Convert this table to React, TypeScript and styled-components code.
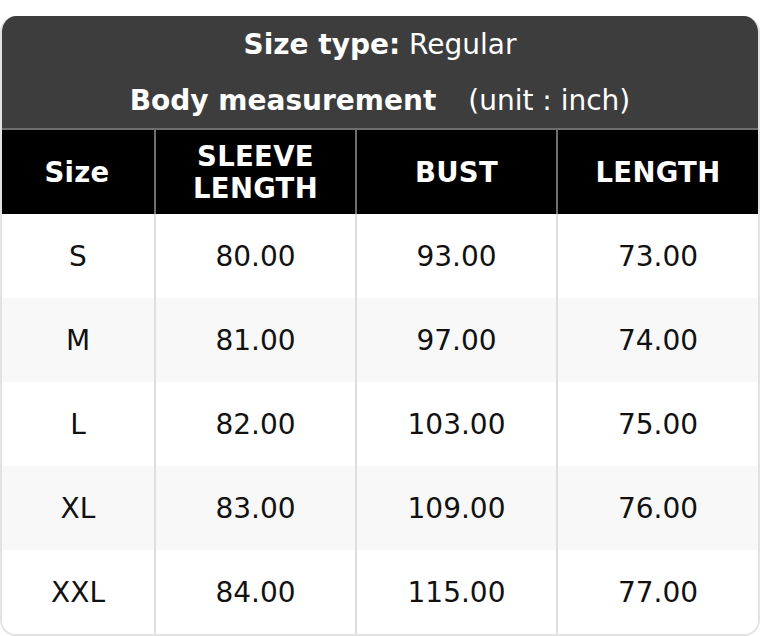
import React from "react";
import styled, { createGlobalStyle } from "styled-components";

const Global = createGlobalStyle`
  html, body { margin: 0; padding: 0; background: #fff; }
  body { padding-top: 16px; font-family: "DejaVu Sans", "Liberation Sans", sans-serif; }
`;

const Card = styled.div`
  width: 760px;
  box-sizing: border-box;
  border-radius: 16px;
  overflow: hidden;
  border: 2px solid #e2e2e2;
  border-top: none;
  background: #fff;
`;

const Header = styled.div`
  background: #3d3d3d;
  color: #fff;
  height: 112px;
  display: flex;
  flex-direction: column;
  align-items: center;
  margin: 0 -2px;
`;

const HeaderLine = styled.div<{ $h: number }>`
  height: ${(p) => p.$h}px;
  display: flex;
  align-items: center;
  justify-content: center;
  font-size: 28px;
  white-space: pre;
`;

const Bold = styled.span`
  font-weight: bold;
`;

const Unit = styled.span`
  margin-left: 32px;
`;

const Grid = styled.div`
  display: grid;
  grid-template-columns: 152px 201px 201px 1fr;
`;

const HeadCell = styled.div<{ $first?: boolean }>`
  background: #000;
  color: #fff;
  height: 84px;
  display: flex;
  align-items: center;
  justify-content: center;
  text-align: center;
  font-weight: bold;
  font-size: 27.5px;
  line-height: 32px;
  letter-spacing: 0.3px;
  white-space: pre-line;
  border-top: 2px solid #6e6e6e;
  border-left: ${(p) => (p.$first ? "none" : "2px solid #6e6e6e")};
  margin: ${(p) => (p.$first ? "0 0 0 -2px" : "0")};
`;

const Cell = styled.div<{ $alt: boolean; $first?: boolean }>`
  background: ${(p) => (p.$alt ? "#f8f8f8" : "#fff")};
  color: #111;
  height: 84px;
  display: flex;
  align-items: center;
  justify-content: center;
  font-size: 28px;
  border-left: ${(p) => (p.$first ? "none" : "2px solid #dedede")};
`;

const heads = ["Size", "SLEEVE\nLENGTH", "BUST", "LENGTH"];
const rows = [
  ["S", "80.00", "93.00", "73.00"],
  ["M", "81.00", "97.00", "74.00"],
  ["L", "82.00", "103.00", "75.00"],
  ["XL", "83.00", "109.00", "76.00"],
  ["XXL", "84.00", "115.00", "77.00"],
];

export default function App() {
  return (
    <>
      <Global />
      <Card>
        <Header>
          <HeaderLine $h={56}>
            <Bold>Size type:</Bold> Regular
          </HeaderLine>
          <HeaderLine $h={56}>
            <Bold>Body measurement</Bold>
            <Unit>(unit : inch)</Unit>
          </HeaderLine>
        </Header>
        <Grid>
          {heads.map((h, i) => (
            <HeadCell key={h} $first={i === 0}>
              {h}
            </HeadCell>
          ))}
          {rows.map((r, ri) =>
            r.map((c, ci) => (
              <Cell key={`${ri}-${ci}`} $alt={ri % 2 === 1} $first={ci === 0}>
                {c}
              </Cell>
            ))
          )}
        </Grid>
      </Card>
    </>
  );
}
